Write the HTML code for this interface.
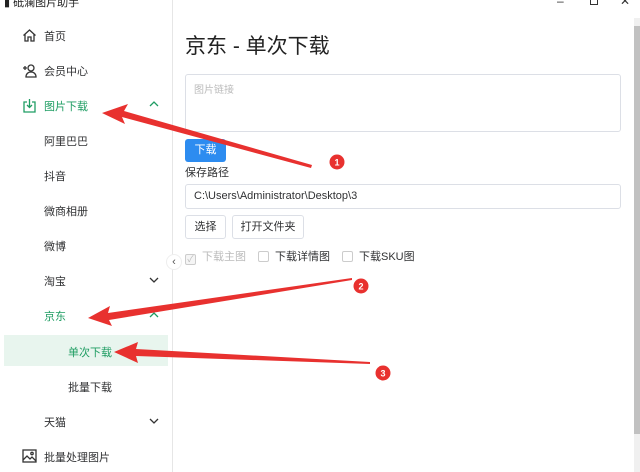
<!DOCTYPE html>
<html><head><meta charset="utf-8"><style>
*{margin:0;padding:0;box-sizing:border-box}
body{width:640px;height:472px;overflow:hidden;background:#fff;font-family:"Liberation Sans","Noto Sans CJK SC",sans-serif;position:relative;color:#303133}
.a{position:absolute;white-space:nowrap}
.side{position:absolute;left:0;top:0;width:173px;height:472px;border-right:1px solid #e6e6e6}
.it{position:absolute;font-size:11px;color:#303133}
.g{color:#1f9d63}
.chev{position:absolute;left:149px}
.box{position:absolute;border:1px solid #dcdfe6;border-radius:3px;background:#fff}
.cb{display:inline-block;width:11px;height:11px;border:1px solid #ccc;border-radius:2px;vertical-align:-2px;margin-right:6px;background:#fff}
</style></head><body>
<div class="a" style="left:4px;top:-6px;font-size:11px;color:#222">▮ 砥澜图片助手</div>
<div class="a" style="left:557px;top:-6px;font-size:12px;color:#333">–</div>
<div class="a" style="left:590px;top:-4px;width:8px;height:9px;border:1px solid #333;border-top:none"></div>
<div class="a" style="left:620px;top:-6px;font-size:12px;color:#333">✕</div>
<div class="a" style="left:634px;top:18px;width:6px;height:454px;background:#f0f0f0"></div>
<div class="a" style="left:634px;top:26px;width:6px;height:408px;background:#c1c1c1"></div>
<div class="side">
<svg class="a" style="left:22px;top:28px" width="15" height="15" viewBox="0 0 15 15" fill="none" stroke="#333" stroke-width="1.3"><path d="M1.5 7.5L7.5 2l6 5.5M3 6.5V13h3V9h3v4h3V6.5"/></svg>
<div class="it" style="left:44px;top:28px">首页</div>
<svg class="a" style="left:22px;top:63px" width="15" height="15" viewBox="0 0 15 15" fill="none" stroke="#333" stroke-width="1.3"><circle cx="9" cy="5" r="3"/><path d="M4 14c0-3 2-5 5-5s5 2 5 5z M1 5h4M3 3v4"/></svg>
<div class="it" style="left:44px;top:63px">会员中心</div>
<svg class="a" style="left:22px;top:98px" width="15" height="15" viewBox="0 0 15 15" fill="none" stroke="#1f9d63" stroke-width="1.3"><path d="M5 4H2v10h11V4h-3M7.5 1v8M5 7l2.5 2.5L10 7"/></svg>
<div class="it g" style="left:44px;top:98px">图片下载</div>
<svg class="chev" style="top:101px" width="10" height="6" viewBox="0 0 10 6" fill="none" stroke="#1f9d63" stroke-width="1.3"><path d="M1 5l4-4 4 4"/></svg>
<div class="it" style="left:44px;top:133px">阿里巴巴</div>
<div class="it" style="left:44px;top:168px">抖音</div>
<div class="it" style="left:44px;top:203px">微商相册</div>
<div class="it" style="left:44px;top:238px">微博</div>
<div class="it" style="left:44px;top:273px">淘宝</div>
<svg class="chev" style="top:277px" width="10" height="6" viewBox="0 0 10 6" fill="none" stroke="#333" stroke-width="1.3"><path d="M1 1l4 4 4-4"/></svg>
<div class="it g" style="left:44px;top:308px">京东</div>
<svg class="chev" style="top:312px" width="10" height="6" viewBox="0 0 10 6" fill="none" stroke="#1f9d63" stroke-width="1.3"><path d="M1 5l4-4 4 4"/></svg>
<div class="a" style="left:4px;top:335px;width:164px;height:31px;background:#e8f5ee"></div>
<div class="it g" style="left:68px;top:344px">单次下载</div>
<div class="it" style="left:68px;top:379px">批量下载</div>
<div class="it" style="left:44px;top:414px">天猫</div>
<svg class="chev" style="top:418px" width="10" height="6" viewBox="0 0 10 6" fill="none" stroke="#333" stroke-width="1.3"><path d="M1 1l4 4 4-4"/></svg>
<svg class="a" style="left:22px;top:449px" width="15" height="14" viewBox="0 0 15 14" fill="none" stroke="#333" stroke-width="1.3"><rect x="1" y="1" width="13" height="12"/><path d="M1 11l4-4 3 3 2-2 4 4"/><circle cx="10" cy="4.5" r="1.2"/></svg>
<div class="it" style="left:44px;top:449px">批量处理图片</div>
</div>
<div class="a" style="left:166px;top:254px;width:16px;height:16px;border-radius:50%;background:#fff;border:1px solid #eee;font-size:11px;text-align:center;line-height:14px;color:#555">‹</div>
<div class="a" style="left:185px;top:30px;font-size:21px;color:#222">京东 - 单次下载</div>
<div class="box" style="left:185px;top:74px;width:436px;height:58px"></div>
<div class="a" style="left:194px;top:81px;font-size:10px;color:#bbb">图片链接</div>
<div class="a" style="left:185px;top:139px;width:41px;height:23px;background:#2d8cf0;border-radius:3px;color:#fff;font-size:11px;text-align:center;line-height:23px">下载</div>
<div class="a" style="left:185px;top:164px;font-size:11px">保存路径</div>
<div class="box" style="left:185px;top:184px;width:436px;height:25px"></div>
<div class="a" style="left:194px;top:190px;font-size:11px">C:\Users\Administrator\Desktop\3</div>
<div class="box" style="left:185px;top:215px;width:41px;height:24px;font-size:11px;text-align:center;line-height:22px">选择</div>
<div class="box" style="left:232px;top:215px;width:72px;height:24px;font-size:11px;text-align:center;line-height:22px">打开文件夹</div>
<div class="a" style="left:185px;top:248px;font-size:11px;color:#bbb"><span class="cb" style="background:#f5f5f5;color:#bbb;font-size:9px;line-height:9px;text-align:center">✓</span>下载主图</div>
<div class="a" style="left:258px;top:248px;font-size:11px"><span class="cb"></span>下载详情图</div>
<div class="a" style="left:342px;top:248px;font-size:11px"><span class="cb"></span>下载SKU图</div>
<svg class="a" style="left:0;top:0" width="640" height="472">
<g fill="#e8312f">
<polygon points="102,113 128,104 124,111 312,165 311,168 122,117 125,124"/>
<polygon points="88,318 110,306 108,313 352,278 352,280 109,320 112,326"/>
<polygon points="114,352 138,342 136,349 370,362 370,364 136,356 138,363"/>
<circle cx="337" cy="162" r="7.5"/><circle cx="361" cy="286" r="7.5"/><circle cx="383" cy="373" r="7.5"/>
</g>
<g fill="#fff" font-size="9" font-family="Liberation Sans" text-anchor="middle" font-weight="bold">
<text x="337" y="165.5">1</text><text x="361" y="289.5">2</text><text x="383" y="376.5">3</text></g>
</svg>
</body></html>
